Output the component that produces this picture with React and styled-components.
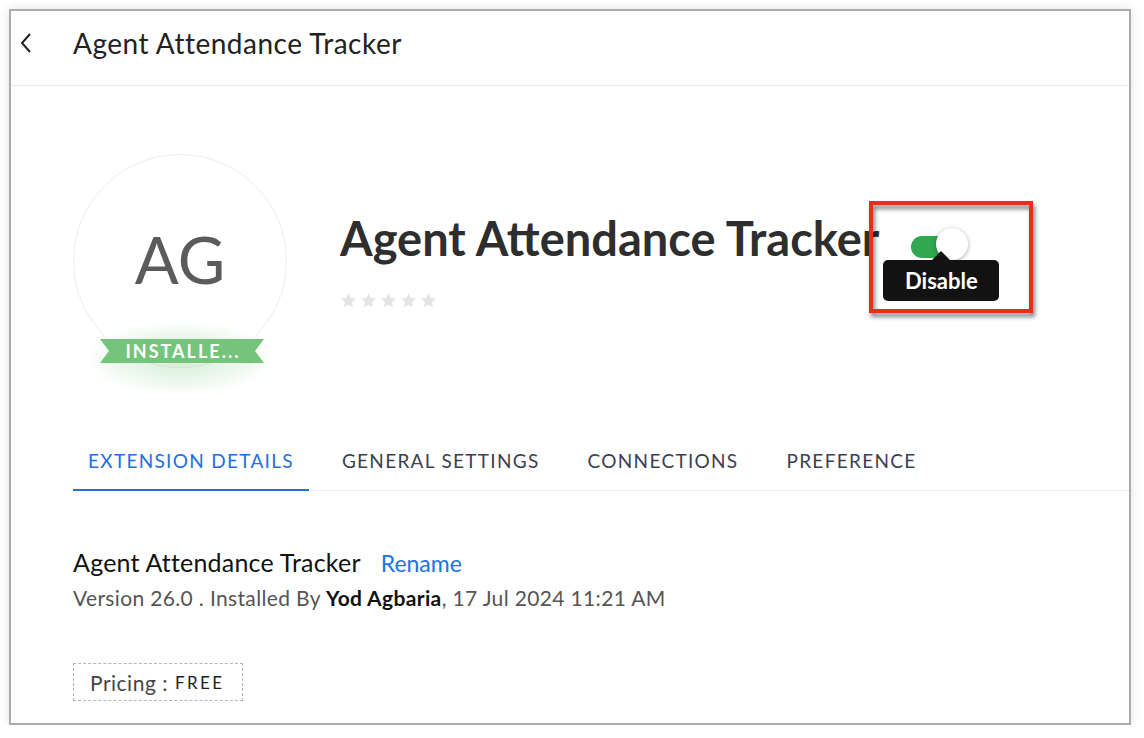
import React from "react";
import styled, { createGlobalStyle } from "styled-components";

const Global = createGlobalStyle`
  html, body { margin: 0; padding: 0; background: #ffffff; }
  body { font-family: Lato, "Open Sans", sans-serif; }
  * { box-sizing: border-box; }
`;

const Frame = styled.div`
  margin: 9px 0 0 9px;
  width: 1122px;
  height: 716px;
  border: 2px solid #a9adb0;
  background: #fff;
  box-shadow: 0 0 10px rgba(0, 0, 0, 0.12);
  overflow: hidden;
`;

const Header = styled.header`
  height: 75px;
  border-bottom: 1px solid #e8e9ea;
  display: flex;
  align-items: center;
  padding: 0 0 10px 8px;
  gap: 40px;
`;

const BackButton = styled.button`
  border: 0;
  background: none;
  padding: 0;
  width: 14px;
  height: 24px;
  display: flex;
  align-items: center;
  justify-content: center;
  cursor: pointer;
  color: #222;
`;

const HeaderTitle = styled.h1`
  margin: 0;
  font-size: 28px;
  font-weight: 400;
  letter-spacing: 0.5px;
  color: #222;
`;

const Body = styled.main`
  padding-left: 62px;
`;

const Hero = styled.section`
  display: flex;
  margin-top: 68px;
  gap: 53px;
`;

const AvatarWrap = styled.div`
  position: relative;
  width: 214px;
  height: 214px;
  flex: none;
`;

const Avatar = styled.div`
  width: 214px;
  height: 214px;
  border-radius: 50%;
  border: 1px solid #ececec;
  display: flex;
  align-items: center;
  justify-content: center;
  font-size: 65px;
  color: #5b5b5b;
  padding-bottom: 4px;
`;

const RibbonGlow = styled.div`
  position: absolute;
  left: 14px;
  top: 168px;
  width: 186px;
  height: 72px;
  border-radius: 50%;
  background: radial-gradient(ellipse at center, rgba(120, 200, 125, 0.32) 0%, rgba(120, 200, 125, 0.12) 50%, rgba(120, 200, 125, 0) 72%);
`;

const Ribbon = styled.div`
  position: absolute;
  left: 27px;
  top: 185px;
  width: 164px;
  height: 24px;
  background: #74c47b;
  clip-path: polygon(0 0, 100% 0, calc(100% - 9px) 50%, 100% 100%, 0 100%, 9px 50%);
  color: #fff;
  font-weight: 700;
  font-size: 18px;
  letter-spacing: 2px;
  display: flex;
  align-items: center;
  justify-content: center;
  padding-left: 2px;
`;

const TitleBlock = styled.div`
  display: flex;
  flex-direction: column;
  padding-top: 57px;
`;

const TitleRow = styled.div`
  display: flex;
  align-items: flex-start;
`;

const BigTitle = styled.h2`
  margin: 0;
  font-size: 47px;
  line-height: 55px;
  font-weight: 700;
  color: #2e2e2e;
`;

const ToggleArea = styled.div`
  position: relative;
  margin-left: 32px;
  margin-top: 25px;
  width: 58px;
  height: 22px;
`;

const Track = styled.div`
  width: 45px;
  height: 22px;
  border-radius: 11px;
  background: ${(p) => (p.$on ? "#2fa84f" : "#ccc")};
`;

const Knob = styled.div`
  position: absolute;
  left: 25px;
  top: -8px;
  width: 32px;
  height: 32px;
  border-radius: 50%;
  background: #fff;
  box-shadow: 0 1px 4px rgba(0, 0, 0, 0.35);
`;

const Tooltip = styled.div`
  position: absolute;
  left: -28px;
  top: 24px;
  width: 116px;
  height: 41px;
  border-radius: 5px;
  background: #121212;
  color: #fff;
  font-weight: 700;
  font-size: 22px;
  display: flex;
  align-items: center;
  justify-content: center;
  &::before {
    content: "";
    position: absolute;
    left: 48px;
    top: -9px;
    border-left: 10px solid transparent;
    border-right: 10px solid transparent;
    border-bottom: 10px solid #121212;
  }
`;

const Highlight = styled.div`
  position: absolute;
  left: -42px;
  top: -35px;
  width: 164px;
  height: 112px;
  border: 4px solid #f02b1e;
  filter: drop-shadow(2px 4px 2px rgba(0, 0, 0, 0.5));
  pointer-events: none;
`;

const Stars = styled.div`
  display: flex;
  gap: 3px;
  margin-top: 26px;
`;

const Tabs = styled.nav`
  display: flex;
  margin-top: 82px;
  border-bottom: 1px dotted #d9d9d9;
`;

const Tab = styled.div`
  padding: 0 15px 17px;
  margin-right: 18px;
  margin-bottom: -1px;
  font-size: 19px;
  line-height: 22px;
  letter-spacing: 1.3px;
  color: ${(p) => (p.$active ? "#2270e0" : "#3c4150")};
  border-bottom: 2px solid ${(p) => (p.$active ? "#2270e0" : "transparent")};
`;

const Details = styled.section`
  margin-top: 56px;
`;

const NameRow = styled.div`
  display: flex;
  align-items: baseline;
  gap: 20px;
  font-size: 25px;
  letter-spacing: 0.2px;
`;

const Name = styled.span`
  color: #111;
`;

const LinkText = styled.a`
  color: #1a73e8;
  font-size: 23px;
  letter-spacing: 0;
  text-decoration: none;
  cursor: pointer;
`;

const Meta = styled.div`
  margin-top: 8px;
  font-size: 21px;
  letter-spacing: 0.35px;
  color: #555;
  & b {
    color: #111;
    font-weight: 700;
  }
`;

const Pricing = styled.div`
  display: inline-flex;
  align-items: center;
  margin-top: 53px;
  height: 38px;
  padding: 0 18px 0 16px;
  border: 1px dashed #b7b7b7;
  font-size: 21px;
  letter-spacing: 0.5px;
  color: #444;
`;

const PriceValue = styled.span`
  font-size: 17px;
  letter-spacing: 2.4px;
  color: #222;
  margin-left: 7px;
`;

const Star = () => (
  <svg width="17" height="17" viewBox="0 0 24 24">
    <path
      d="M12 1.8l3.1 6.6 7.2.9-5.3 5 1.4 7.1L12 17.9l-6.4 3.5 1.4-7.1-5.3-5 7.2-.9z"
      fill="#e4e4e4"
    />
  </svg>
);

export default function App() {
  return (
    <>
      <Global />
      <Frame>
        <Header>
          <BackButton aria-label="Back">
            <svg width="14" height="22" viewBox="0 0 14 22">
              <path d="M11 2 L3 11 L11 20" fill="none" stroke="#222" strokeWidth="2" />
            </svg>
          </BackButton>
          <HeaderTitle>Agent Attendance Tracker</HeaderTitle>
        </Header>
        <Body>
          <Hero>
            <AvatarWrap>
              <Avatar>AG</Avatar>
              <RibbonGlow />
              <Ribbon>INSTALLE...</Ribbon>
            </AvatarWrap>
            <TitleBlock>
              <TitleRow>
                <BigTitle>Agent Attendance Tracker</BigTitle>
                <ToggleArea>
                  <Track $on />
                  <Knob />
                  <Tooltip>Disable</Tooltip>
                  <Highlight />
                </ToggleArea>
              </TitleRow>
              <Stars>
                {[0, 1, 2, 3, 4].map((i) => (
                  <Star key={i} />
                ))}
              </Stars>
            </TitleBlock>
          </Hero>
          <Tabs>
            <Tab $active>EXTENSION DETAILS</Tab>
            <Tab>GENERAL SETTINGS</Tab>
            <Tab>CONNECTIONS</Tab>
            <Tab>PREFERENCE</Tab>
          </Tabs>
          <Details>
            <NameRow>
              <Name>Agent Attendance Tracker</Name>
              <LinkText>Rename</LinkText>
            </NameRow>
            <Meta>
              Version 26.0 . Installed By <b>Yod Agbaria</b>, 17 Jul 2024 11:21 AM
            </Meta>
            <Pricing>
              Pricing :<PriceValue>FREE</PriceValue>
            </Pricing>
          </Details>
        </Body>
      </Frame>
    </>
  );
}
